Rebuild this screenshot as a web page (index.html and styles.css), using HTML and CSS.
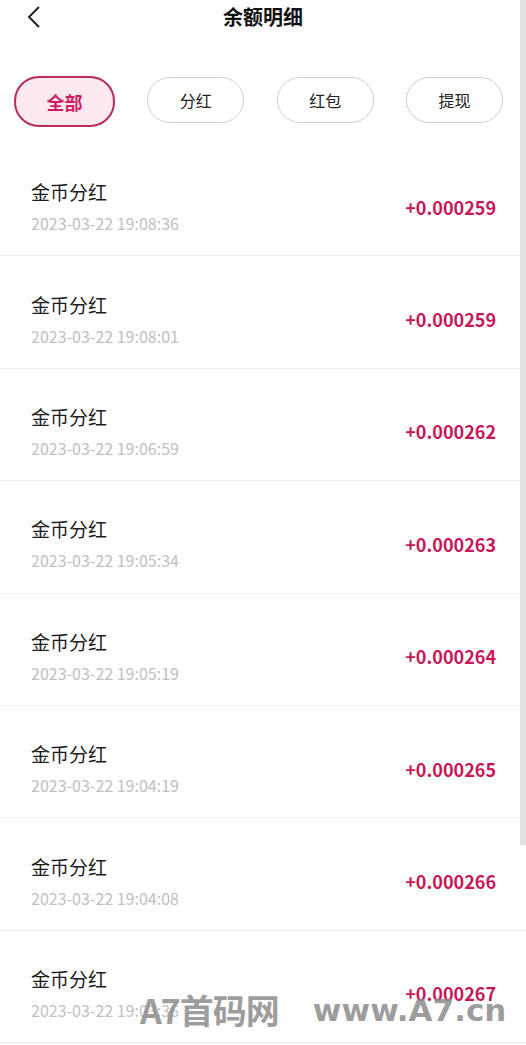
FILE: index.html
```html
<!DOCTYPE html>
<html lang="zh-CN">
<head>
<meta charset="UTF-8">
<title>余额明细</title>
<link rel="stylesheet" href="styles.css">
</head>
<body>
<div class="page">
	<div class="header">
		<span class="back">
			<svg width="14" height="24" viewBox="0 0 14 24"><path d="M12 2 L2 12 L12 22" fill="none" stroke="#222" stroke-width="2"/></svg>
		</span>
		<h1>余额明细</h1>
	</div>

	<div class="tabs">
		<span class="tab active">全部</span>
		<span class="tab">分红</span>
		<span class="tab">红包</span>
		<span class="tab">提现</span>
	</div>

	<ul class="list">
		<li>
			<div class="info"><p class="name">金币分红</p><p class="time">2023-03-22 19:08:36</p></div>
			<span class="amount">+0.000259</span>
		</li>
		<li>
			<div class="info"><p class="name">金币分红</p><p class="time">2023-03-22 19:08:01</p></div>
			<span class="amount">+0.000259</span>
		</li>
		<li>
			<div class="info"><p class="name">金币分红</p><p class="time">2023-03-22 19:06:59</p></div>
			<span class="amount">+0.000262</span>
		</li>
		<li>
			<div class="info"><p class="name">金币分红</p><p class="time">2023-03-22 19:05:34</p></div>
			<span class="amount">+0.000263</span>
		</li>
		<li>
			<div class="info"><p class="name">金币分红</p><p class="time">2023-03-22 19:05:19</p></div>
			<span class="amount">+0.000264</span>
		</li>
		<li>
			<div class="info"><p class="name">金币分红</p><p class="time">2023-03-22 19:04:19</p></div>
			<span class="amount">+0.000265</span>
		</li>
		<li>
			<div class="info"><p class="name">金币分红</p><p class="time">2023-03-22 19:04:08</p></div>
			<span class="amount">+0.000266</span>
		</li>
		<li>
			<div class="info"><p class="name">金币分红</p><p class="time">2023-03-22 19:03:36</p></div>
			<span class="amount">+0.000267</span>
		</li>
	</ul>

	<div class="scrollbar"></div>
	<div class="watermark"><span class="wm-name">A7首码网</span><span class="wm-url">www.A7.cn</span></div>
</div>
</body>
</html>
```

FILE: styles.css
```css
*{
	box-sizing: border-box;
}
html,body{
	margin: 0;
	padding: 0;
	background: #fff;
}
body{
	font-family: "Noto Sans CJK SC", "Noto Sans", sans-serif;
	color: #222;
	overflow: hidden;
}
ul,li,p,h1{
	margin: 0;
	padding: 0;
	list-style: none;
}
.page{
	width: 526px;
	height: 1045px;
	position: relative;
	overflow: hidden;
}
.header{
	height: 34px;
	display: flex;
	align-items: center;
	justify-content: center;
	position: relative;
}
.header h1{
	font-size: 20px;
	font-weight: 700;
	line-height: 34px;
	color: #111;
}
.back{
	position: absolute;
	left: 27px;
	top: 5px;
	width: 14px;
	height: 24px;
}
.back svg{
	display: block;
}
.tabs{
	display: flex;
	align-items: flex-start;
	justify-content: space-between;
	padding: 0 23px 0 14px;
	margin-top: 42px;
	height: 51px;
}
.tab{
	width: 97px;
	height: 46px;
	margin-top: 1px;
	border: 1.5px solid #cfcfcf;
	border-radius: 23px;
	display: flex;
	align-items: center;
	justify-content: center;
	font-size: 16px;
	color: #222;
}
.tab.active{
	width: 101px;
	height: 51px;
	margin-top: 0;
	border: 2px solid #b82a62;
	border-radius: 25px;
	background: #fdeaf1;
	color: #d41a5e;
	font-size: 18px;
	font-weight: 700;
}
.list{
	margin-top: 17px;
}
.list li{
	height: 112.4px;
	border-bottom: 1px solid #efefef;
	display: flex;
	align-items: center;
	justify-content: space-between;
	padding: 14px 30px 0 31px;
}
.name{
	font-size: 19px;
	line-height: 24px;
	color: #1c1c1c;
}
.time{
	font-size: 16px;
	line-height: 20px;
	margin-top: 9px;
	color: #c0c0c0;
}
.amount{
	font-size: 18px;
	font-weight: 700;
	color: #c8165a;
}
.scrollbar{
	position: absolute;
	right: 0;
	top: 0;
	width: 6px;
	height: 845px;
	background: #e2e2e2;
}
.watermark{
	position: absolute;
	left: 140px;
	top: 990px;
	display: flex;
	align-items: center;
	gap: 34px;
	color: rgba(140,140,140,0.85);
	font-weight: 700;
	line-height: 40px;
}
.wm-name{
	font-size: 34px;
	letter-spacing: -1px;
}
.wm-url{
	font-family: "DejaVu Sans", sans-serif;
	font-size: 31px;
	letter-spacing: 0px;
}
```
